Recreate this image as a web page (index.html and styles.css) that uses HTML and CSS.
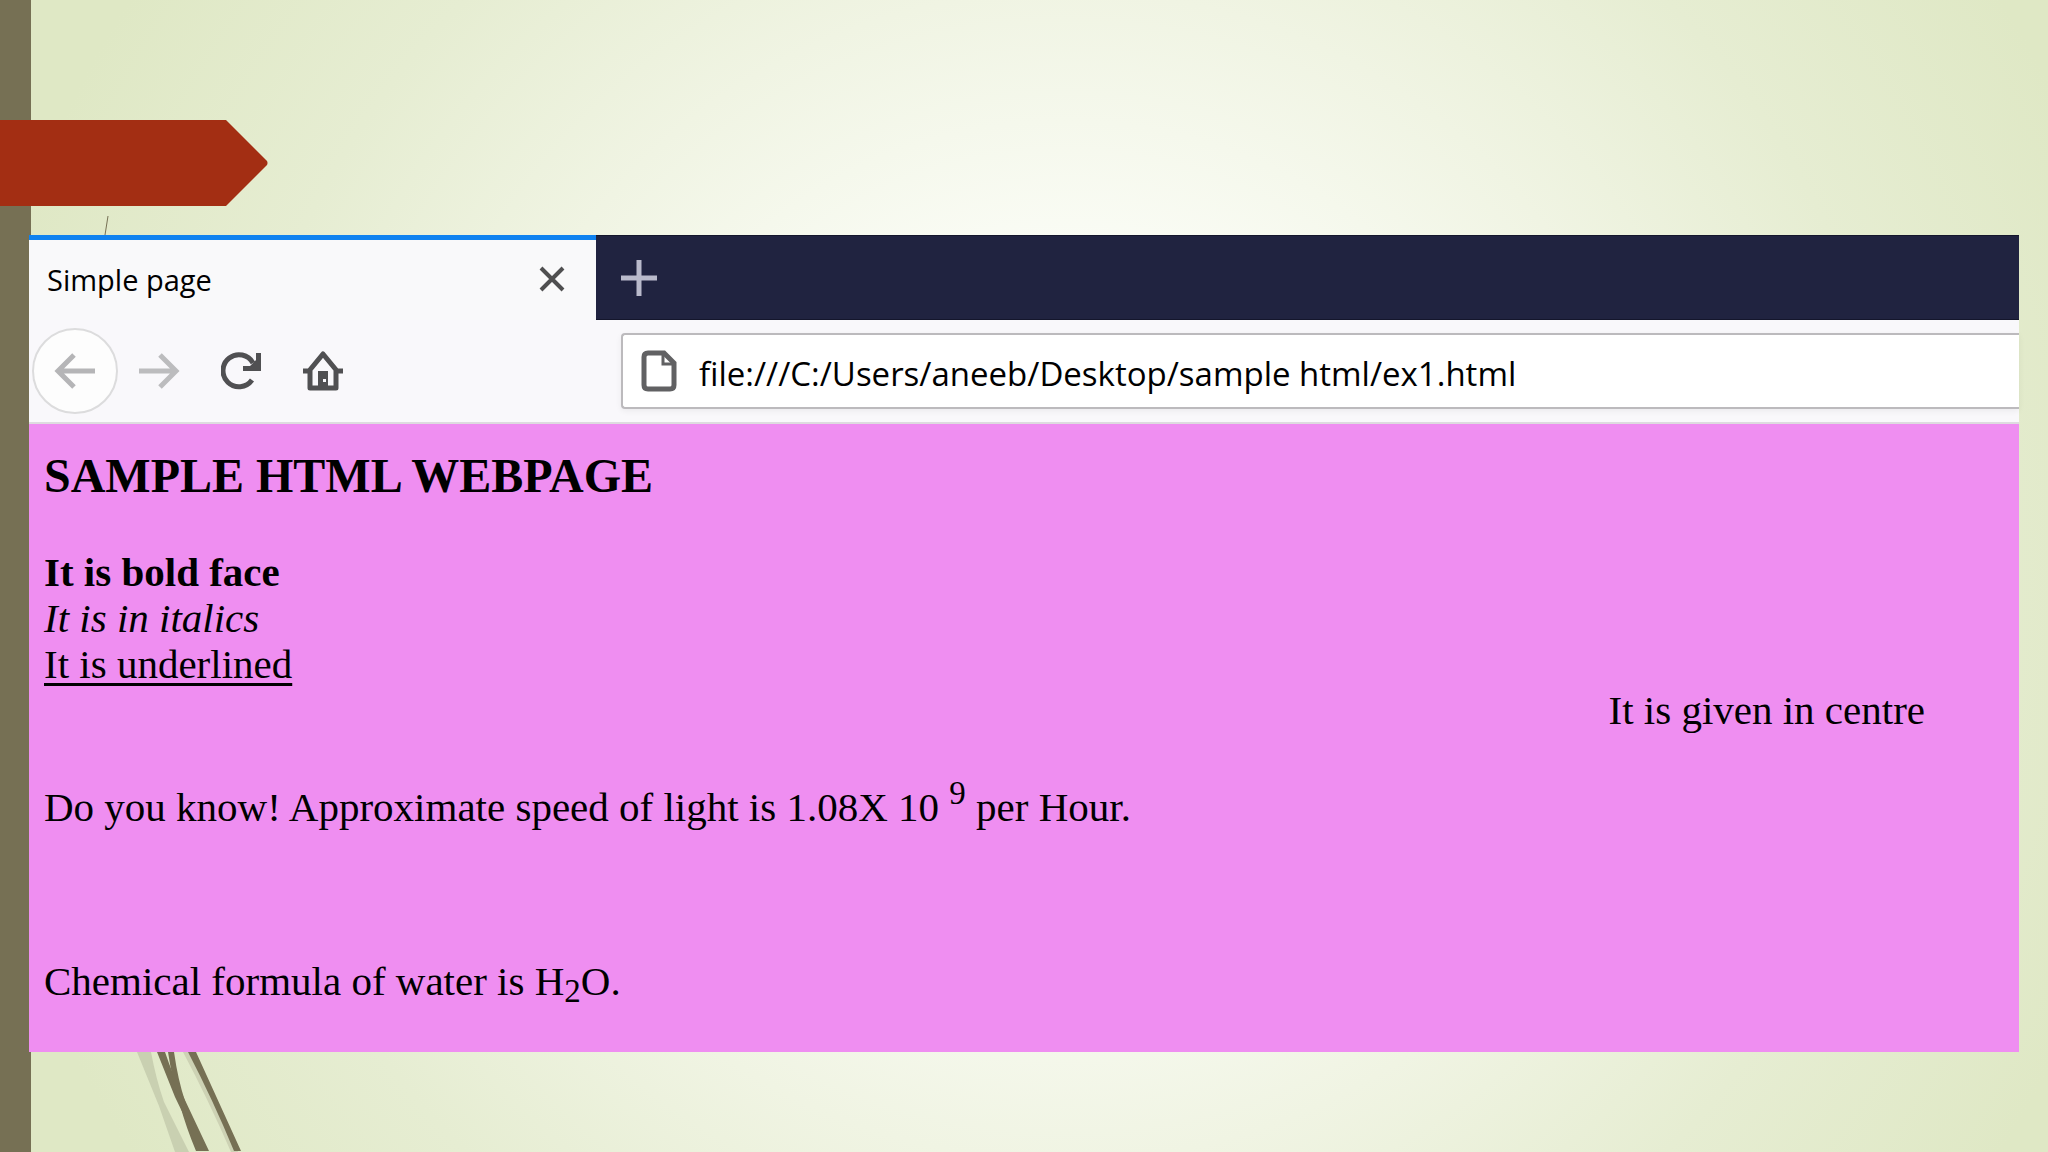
FILE: index.html
```html
<!DOCTYPE html>
<html lang="en">
<head>
    <meta charset="UTF-8">
    <meta name="viewport" content="width=device-width, initial-scale=1.0">
    <title>Simple page</title>
    <link rel="stylesheet" href="styles.css">
</head>
<body>
    <div class="slide">
        <svg class="arrow" viewBox="0 0 268 86" aria-hidden="true">
            <path d="M0 0H226L267 41Q268 43 267 45L226 86H0Z" fill="#a32e13"/>
        </svg>
        <svg class="tick" viewBox="0 0 10 20" aria-hidden="true">
            <path d="M7 1L4 20" stroke="#767054" fill="none"/>
        </svg>

        <main class="browser">
            <div class="tab-bar">
                <div class="tab">
                    <span class="tab-title">Simple page</span>
                    <button class="icon-btn" aria-label="Close tab">
                        <svg width="26" height="26" viewBox="0 0 26 26"><path d="M2 2L24 24M24 2L2 24" stroke="#4f4f50" stroke-width="4" fill="none"/></svg>
                    </button>
                </div>
                <button class="icon-btn new-tab" aria-label="New tab">
                    <svg width="36" height="36" viewBox="0 0 36 36"><path d="M18 0V36M0 18H36" stroke="#b9bacb" stroke-width="5" fill="none"/></svg>
                </button>
            </div>

            <div class="toolbar">
                <nav class="nav-buttons">
                    <button class="nav-btn back" aria-label="Back">
                        <svg width="42" height="36" viewBox="0 0 42 36"><path d="M20 2L4 18L20 34M4 18H41" stroke="#b5b5b7" stroke-width="5" fill="none"/></svg>
                    </button>
                    <button class="nav-btn" aria-label="Forward">
                        <svg width="42" height="36" viewBox="0 0 42 36"><path d="M22 2L38 18L22 34M38 18H1" stroke="#bcbcbe" stroke-width="5" fill="none"/></svg>
                    </button>
                    <button class="nav-btn" aria-label="Reload">
                        <svg width="40" height="38" viewBox="0 0 40 38"><path d="M32 11A16 16 0 1 0 31 28" stroke="#505052" stroke-width="5" fill="none"/><path d="M40 1V19H22V14H29L35 8V1Z" fill="#505052"/></svg>
                    </button>
                    <button class="nav-btn" aria-label="Home">
                        <svg width="42" height="42" viewBox="0 0 42 42"><path d="M1 21H7L21 4L35 21H41M8 20V38H34V20" stroke="#505052" stroke-width="5" stroke-linejoin="round" fill="none"/><path d="M16 21H26V39H16Z" fill="#505052"/><path d="M21 29H24V32H21Z" fill="#f9f8fb"/></svg>
                    </button>
                </nav>
                <div class="url-bar">
                    <svg class="page-icon" width="36" height="42" viewBox="0 0 36 42"><path d="M7 3H23L33 13V35Q33 39 29 39H7Q3 39 3 35V7Q3 3 7 3Z" stroke="#616163" stroke-width="5" fill="none"/><path d="M22 3V14H33" stroke="#616163" stroke-width="3" fill="none"/></svg>
                    <input type="text" class="url-input" aria-label="Address" value="file:///C:/Users/aneeb/Desktop/sample html/ex1.html">
                </div>
            </div>

            <div class="page">
                <h1>SAMPLE HTML WEBPAGE</h1>
                <b>It is bold face</b><br>
                <i>It is in italics</i><br>
                <u>It is underlined</u><br>
                <div class="centre">It is given in centre</div>
                <p>Do you know! Approximate speed of light is 1.08X 10 <sup>9</sup> per Hour.</p>
                <p class="water">Chemical formula of water is H<sub>2</sub>O.</p>
            </div>
        </main>

        <svg class="wisps" viewBox="0 0 120 100" aria-hidden="true">
            <path d="M7 0H21Q26 27 34 50L59 100H45L29 54Z" fill="#c9d0b1"/>
            <path d="M53 0H62L108 100H101Q78 47 53 0Z" fill="#cdd2b4"/>
            <path d="M27 0H35Q43 24 54 46L79 99H71L45 45Z" fill="#767054"/>
            <path d="M38 0H44Q48 28 55 49Q64 75 75 99H66Q56 75 50 53Q42 27 38 0Z" fill="#767054"/>
            <path d="M58 0H66L111 99H104Q83 48 58 0Z" fill="#767054"/>
        </svg>
    </div>
</body>
</html>
```
FILE: styles.css
```css
* {
    margin: 0;
    padding: 0;
    box-sizing: border-box;
}

body {
    font-family: "Liberation Serif", "Times New Roman", serif;
    color: #000;
}

.slide {
    position: relative;
    min-height: 100vh;
    padding-top: 120px;
    overflow: hidden;
    background:
        linear-gradient(#767054, #767054) left / 31px 100% no-repeat,
        radial-gradient(ellipse 54% 94% at 52% 50%, #ffffff 0%, #fafcf5 30%, #f0f4e3 54%, #e6edd2 76%, #dfe8c5 100%);
}

.arrow {
    display: block;
    width: 268px;
    height: 86px;
}

.tick {
    position: absolute;
    top: 215px;
    left: 101px;
    width: 10px;
    height: 20px;
}

.browser {
    margin: 29px 29px 0;
    background-color: #f9f8fb;
}

.tab-bar {
    display: flex;
    height: 85px;
    background-color: #202340;
    border-top: 1px solid #14162c;
    border-bottom: 1px solid #14162c;
}

.tab {
    display: flex;
    align-items: center;
    justify-content: space-between;
    width: 567px;
    height: 85px;
    margin-top: -1px;
    padding: 0 31px 2px 18px;
    background-color: #f9f9fa;
    border-top: 5px solid #0f82f0;
}

.tab-title,
.url-input {
    font-family: "Open Sans", "Segoe UI", sans-serif;
    font-size: 29px;
}

.icon-btn,
.nav-btn {
    display: flex;
    align-items: center;
    justify-content: center;
    border: none;
    background: none;
}

.new-tab {
    margin-left: 25px;
}

.toolbar {
    display: grid;
    grid-template-columns: 592px 1fr;
    align-items: center;
    padding: 13px 0;
    border-bottom: 2px solid #dedbe0;
}

.nav-buttons {
    display: flex;
    align-items: center;
    padding-left: 3px;
}

.nav-btn {
    width: 82px;
    height: 76px;
}

.back {
    width: 86px;
    height: 86px;
    margin: -5px 0;
    border: 2px solid #dcdcdd;
    border-radius: 50%;
    background-color: #fdfdfd;
}

.url-bar {
    display: flex;
    align-items: center;
    gap: 22px;
    height: 76px;
    padding-left: 18px;
    border: 2px solid #bcbabd;
    border-right: none;
    border-radius: 4px 0 0 4px;
    background-color: #fff;
    box-shadow: 0 2px 6px rgba(0, 0, 0, 0.06);
}

.page-icon {
    flex: none;
}

.url-input {
    flex: 1;
    min-width: 0;
    height: 60px;
    padding-top: 4px;
    border: none;
    outline: none;
    background: none;
    font-size: 33px;
}

.page {
    padding: 25px 16px 44px 15px;
    background-color: #ef8ef1;
    font-size: 41px;
    line-height: 46px;
}

.page h1 {
    margin-bottom: 46px;
    font-size: 48px;
    line-height: 54px;
}

.page u {
    text-decoration-thickness: 3px;
    text-underline-offset: 5px;
}

.centre {
    padding-right: 78px;
    text-align: right;
}

.page p {
    margin-top: 44px;
}

.page .water {
    margin-top: 128px;
}

.page sup,
.page sub {
    font-size: 33px;
    line-height: 1;
}

.page sup {
    vertical-align: 17px;
}

.page sub {
    vertical-align: -7px;
}

.wisps {
    display: block;
    width: 120px;
    height: 100px;
    margin-left: 130px;
}
```
